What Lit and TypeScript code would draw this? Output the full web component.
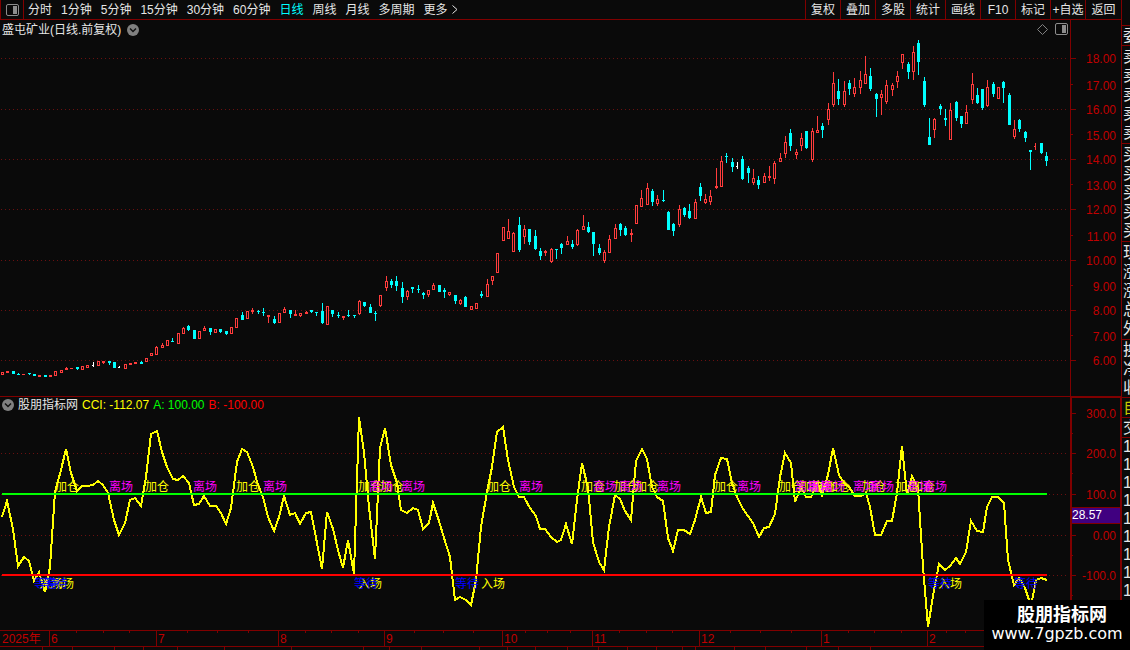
import { LitElement, html, svg, css } from "lit";
import { customElement, property } from "lit/decorators.js";
import { classMap } from "lit/directives/class-map.js";

const COLUMN_STEP = 5.327;
const columnX = (i: number) => Math.round(2 + i * COLUMN_STEP);

// Each candle: high, body top, body bottom, low, kind (r = up, c = down, w = flat).
const CANDLES = `
372 372 375 375 r;371 371 373 373 r;371 371 374 374 c;373 374 375 375 c;374 374 375 375 r;373 373 374 375 c;374 374 376 376 c;375 375 377 377 r;375 375 377 377 c;375 375 377 377 r;
371 371 376 376 r;370 370 373 373 r;367 368 370 370 r;368 368 369 369 r;367 367 369 370 c;366 366 370 370 r;365 365 368 368 r;362 365 366 367 w;361 361 366 366 r;361 361 363 364 r;
361 361 363 365 c;362 362 368 368 c;366 367 368 368 w;364 364 369 369 r;363 363 365 365 r;362 362 364 364 r;361 362 364 364 c;358 358 362 362 r;353 353 356 356 r;346 347 355 355 r;
343 345 348 348 r;340 340 346 346 r;338 341 342 342 c;333 333 344 344 r;327 328 334 334 r;325 326 330 331 c;330 330 339 339 c;331 331 339 339 r;326 328 331 331 r;328 328 332 335 c;
329 329 333 333 r;329 329 332 333 c;331 331 334 335 c;327 327 334 334 r;318 318 328 328 r;312 315 320 320 c;311 311 319 319 r;308 310 312 314 r;310 311 312 314 c;308 312 313 316 c;
315 315 317 323 r;316 319 323 324 c;313 313 323 323 r;307 309 313 313 r;310 310 314 318 c;310 314 316 316 r;313 313 316 317 r;311 312 314 314 r;310 310 312 313 c;312 312 313 316 c;
303 311 323 324 c;306 306 325 325 r;310 310 314 317 c;312 315 316 318 c;316 316 318 320 r;310 315 316 317 c;315 315 316 318 c;300 301 314 315 r;302 302 306 307 c;304 307 313 313 c;
311 313 314 321 c;295 295 306 307 r;276 281 288 291 r;279 281 285 288 c;276 281 286 291 c;282 288 297 303 c;290 291 297 300 r;287 287 289 293 c;285 289 290 293 c;292 293 295 299 c;
290 290 295 297 r;283 285 290 290 r;285 285 292 292 c;288 290 292 298 c;292 292 295 296 r;295 295 301 304 c;299 300 304 305 r;296 297 307 307 c;306 306 310 310 r;303 303 309 309 r;
291 294 296 298 c;279 284 297 297 r;276 276 281 285 r;253 253 273 273 r;227 227 241 241 r;219 231 239 239 r;232 233 252 252 r;217 225 250 252 c;225 229 237 244 r;229 229 242 245 c;
230 236 249 250 c;248 251 256 260 c;250 251 253 256 r;248 249 262 263 r;249 249 250 259 c;243 244 248 254 c;236 241 245 245 r;240 244 247 249 c;229 230 245 246 r;215 226 230 230 r;
222 227 232 233 c;232 232 244 256 c;244 248 253 255 c;250 252 261 263 r;235 239 253 253 r;224 228 239 239 r;223 224 230 236 c;226 228 235 236 c;229 233 235 242 r;205 205 224 224 r;
190 198 207 207 r;183 188 205 205 r;189 191 202 206 c;195 199 204 206 r;190 200 201 202 c;211 212 230 230 c;223 224 231 236 c;205 209 225 227 r;207 208 215 217 c;204 211 218 219 c;
199 202 219 219 r;183 187 196 201 c;194 199 203 204 r;190 196 202 205 r;168 186 188 189 r;156 161 187 187 r;153 156 157 163 c;158 162 167 172 c;162 166 167 169 w;156 159 179 180 c;
166 168 173 183 c;169 178 183 185 r;176 180 185 189 c;173 176 183 183 r;166 176 178 181 r;161 163 179 184 r;153 158 162 162 r;136 142 154 158 r;129 133 146 151 c;149 152 155 159 r;
133 138 146 151 r;131 131 148 149 c;128 131 160 162 r;116 130 133 133 r;123 126 130 138 c;103 109 120 125 r;72 83 105 107 r;79 91 99 105 c;81 91 105 107 r;80 83 89 95 c;
78 87 94 97 r;71 80 88 94 r;56 74 84 84 r;68 76 89 91 c;93 94 99 117 c;90 94 98 115 r;80 85 102 104 r;83 85 90 96 r;71 76 82 88 r;54 54 63 69 r;
62 64 72 79 c;46 52 72 80 r;40 43 62 75 c;77 81 105 107 c;118 137 145 145 c;118 119 130 138 r;104 106 109 115 c;109 118 120 126 c;103 110 140 140 r;101 102 118 121 c;
116 116 124 128 c;105 112 124 124 r;73 84 100 104 r;88 95 103 104 c;89 89 108 110 c;80 87 106 107 r;82 84 94 97 c;87 87 99 99 r;81 82 88 103 c;93 95 125 125 c;
120 129 137 139 r;119 120 129 132 c;131 132 138 142 c;150 150 152 170 c;143 146 147 150 r;143 143 153 154 c;152 156 161 166 c`
  .trim()
  .split(";")
  .map((row) => {
    const [high, top, bottom, low, kind] = row.trim().split(" ");
    return { high: +high, top: +top, bottom: +bottom, low: +low, kind };
  });

const CCI_POINTS =
  "2,517 7,501 13,529 18,566 24,557 29,561 34,581 39,572 45,592 50,567 55,492 61,470 66,449 71,473 77,491 82,486 87,486 93,485 98,481 103,485 108,493 114,520 119,535 125,523 130,500 135,498 141,506 146,477 151,434 157,431 162,452 167,467 173,479 178,480 183,476 189,483 194,505 199,504 204,496 210,506 216,506 221,513 226,524 231,508 237,462 242,449 247,452 253,467 258,485 263,497 268,517 274,531 279,517 284,496 290,515 295,513 300,524 306,513 311,512 317,543 322,569 327,512 333,529 338,550 343,568 348,540 354,574 359,417 364,452 369,507 375,559 380,448 385,428 391,465 397,483 401,510 407,513 413,508 418,510 423,529 429,523 433,503 439,521 444,538 450,557 455,600 460,597 466,600 471,605 476,580 481,527 487,492 492,467 497,432 503,427 508,460 514,487 519,497 524,497 530,508 536,516 540,529 545,529 551,537 557,542 561,540 566,524 572,544 577,500 582,463 588,488 593,542 599,562 604,570 609,527 615,495 620,499 625,511 631,520 636,461 642,449 647,459 652,487 657,497 663,501 668,538 673,551 678,530 684,530 690,534 695,520 701,497 706,513 711,512 715,475 721,458 727,459 732,483 737,497 743,509 748,516 753,523 759,537 764,528 769,527 775,514 780,477 785,453 791,463 795,502 801,487 806,497 811,497 817,482 822,495 828,475 833,448 839,475 844,483 849,487 855,496 861,496 866,493 870,507 875,535 881,535 887,521 892,521 897,493 902,446 907,495 912,476 918,488 923,567 928,627 934,590 939,564 945,570 950,566 956,558 960,564 966,552 971,521 977,531 983,532 987,507 992,497 998,497 1004,503 1008,560 1014,585 1019,578 1025,588 1031,606 1036,580 1041,578 1047,580";

const SIGNALS: { text: string; tone: string; y: number; xs: number[] }[] = [
  { text: "加仓", tone: "yellow", y: 491, xs: [55, 145, 236, 358, 380, 487, 581, 614, 635, 714, 779, 800, 811, 826, 862, 895, 911] },
  { text: "离场", tone: "magenta", y: 491, xs: [109, 193, 263, 369, 401, 519, 593, 619, 657, 737, 795, 808, 821, 853, 870, 907, 923] },
  { text: "入场", tone: "yellow", y: 588, xs: [39, 50, 358, 481, 938] },
  { text: "等待", tone: "blue", y: 588, xs: [34, 44, 354, 455, 928, 1014] },
];

const PRICE_TICKS: [string, number, number][] = [
  ["18.00", 58, 58], ["17.00", 84, 85], ["16.00", 109, 109], ["15.00", 134, 135],
  ["14.00", 159, 159], ["13.00", 184, 185], ["12.00", 209, 209], ["11.00", 235, 236],
  ["10.00", 260, 260], ["9.00", 285, 286], ["8.00", 310, 310], ["7.00", 335, 336], ["6.00", 360, 360],
];

const CCI_TICKS: [string, number][] = [
  ["300.0", 413], ["200.0", 453], ["100.0", 494], ["0.00", 535], ["-100.0", 575],
];

const MONTHS: [string, number][] = [
  ["6", 49], ["7", 156], ["8", 278], ["9", 384], ["10", 502], ["11", 592], ["12", 699], ["1", 821], ["2", 927],
];
const WEEKS = [76, 103, 129, 187, 217, 248, 305, 331, 358, 414, 443, 473, 525, 547, 570, 619, 646, 672, 730, 760, 791, 848, 874, 901, 946, 965];

const TABS: [number, string, boolean][] = [
  [43, "指标", false], [30, "", false], [42, "", false], [29, "", false], [34, "", false],
  [47, "", false], [67, "", false], [72, "", false], [26, "", false], [32, "", false], [58, "", false],
  [28, "", false], [28, "", false], [32, "", false], [31, "", false], [29, "", false], [29, "", false],
  [26, "", false], [13, "", false], [39, "", false], [31, "", false], [41, "", false], [32, "", false],
  [32, "设置", true],
];

const shared = css`
  * { box-sizing: border-box; }
  button {
    margin: 0;
    padding: 0;
    border: 0;
    background: none;
    color: inherit;
    font: inherit;
    white-space: nowrap;
    cursor: pointer;
  }
  svg { display: block; }
`;

const chartStyles = css`
  :host { display: block; position: relative; }
  .plot { width: 100%; height: auto; }
  .crisp { shape-rendering: crispEdges; }
  .frame { fill: #800000; }
  .grid { stroke: #6a1010; stroke-dasharray: 1 3; }
  .scale { fill: #c00000; font-size: 12px; }
  .end { text-anchor: end; }
  .head {
    position: absolute;
    top: 0;
    left: 2px;
    display: flex;
    align-items: center;
    gap: 4px;
    height: 18px;
    line-height: 18px;
    color: #e6e6e6;
    white-space: nowrap;
  }
`;

const chevron = html`<svg width="12" height="12" viewBox="0 0 12 12" aria-hidden="true">
  <circle cx="6" cy="6" r="6" fill="#808080"></circle>
  <path d="M3 4.5 6 7.5 9 4.5" fill="none" stroke="#111" stroke-width="1.5"></path>
</svg>`;

const panelIcon = html`<svg width="13" height="12" viewBox="0 0 13 12" aria-hidden="true">
  <rect x="0.5" y="0.5" width="12" height="11" rx="1.5" fill="none" stroke="#8c8c8c"></rect>
  <rect x="7" y="2" width="4" height="8" fill="#8c8c8c"></rect>
</svg>`;

@customElement("top-toolbar")
export class TopToolbar extends LitElement {
  static styles = [shared, css`
    :host {
      display: flex;
      align-items: stretch;
      justify-content: space-between;
      height: 20px;
      border-bottom: 1px solid #800000;
      color: #e6e6e6;
    }
    .side { display: flex; }
    .toggle {
      display: grid;
      place-items: center;
      width: 24px;
      border: solid #800000;
      border-width: 0 1px;
    }
    .periods { display: flex; align-items: center; gap: 9px; padding-left: 4px; }
    .active { color: #00ffff; }
    .more { display: flex; align-items: center; gap: 4px; }
    .tool { width: 35px; border-left: 1px solid #800000; }
    .tool:last-child { width: 36px; }
  `];

  @property() period = "日线";

  render() {
    const periods = ["分时", "1分钟", "5分钟", "15分钟", "30分钟", "60分钟", "日线", "周线", "月线", "多周期"];
    const tools = ["复权", "叠加", "多股", "统计", "画线", "F10", "标记", "+自选", "返回"];
    return html`
      <div class="side">
        <button class="toggle" aria-label="侧栏">${panelIcon}</button>
        <nav class="periods">
          ${periods.map((p) => html`<button class=${classMap({ active: p === this.period })} @click=${() => (this.period = p)}>${p}</button>`)}
          <button class="more">更多<svg width="6" height="9" viewBox="0 0 6 9" aria-hidden="true">
            <path d="M0.5 0.5 5 4.5 0.5 8.5" fill="none" stroke="#e6e6e6"></path></svg></button>
        </nav>
      </div>
      <div class="side">${tools.map((t) => html`<button class="tool">${t}</button>`)}</div>`;
  }
}

@customElement("price-chart")
export class PriceChart extends LitElement {
  static styles = [shared, chartStyles, css`
    .head { height: 19px; line-height: 20px; gap: 6px; }
    .actions {
      position: absolute;
      top: 3px;
      right: 53px;
      display: flex;
      align-items: center;
      gap: 7px;
    }
    .r { fill: #ff3c3c; stroke: none; }
    .c { fill: #00ffff; }
    .w { fill: #ffffff; }
    .hollow { fill: #0a0a0a; }
  `];

  private candle(c: (typeof CANDLES)[number], i: number) {
    const x = columnX(i);
    const h = c.bottom - c.top;
    const flat = c.kind === "w" || (c.kind === "r" && h === 1 && c.high < c.top);
    return svg`<g class=${c.kind}>
      <rect x=${x} y=${c.high} width="1" height=${c.low - c.high}></rect>
      <rect x=${x - 1} y=${c.top} width=${flat ? 2 : 3} height=${h}></rect>
      ${c.kind === "r" && h > 2 ? svg`<rect class="hollow" x=${x} y=${c.top + 1} width="1" height=${h - 2}></rect>` : null}
    </g>`;
  }

  render() {
    return html`
      <svg class="plot" viewBox="0 20 1121 376" role="img" aria-label="盛屯矿业 日线">
        <g class="crisp">
          ${PRICE_TICKS.map(([, y], i) => i % 2 ? svg`<rect class="frame" x="1071" y=${y} width="2" height="1"></rect>`
            : svg`<path class="grid" d=${`M1 ${y + 0.5}H1067`}></path><rect class="frame" x="1071" y=${y} width="5" height="1"></rect>`)}
          ${CANDLES.map((c, i) => this.candle(c, i))}
          <rect class="frame" x="1070" y="20" width="1" height="376"></rect>
        </g>
        ${PRICE_TICKS.map(([label, , y]) => svg`<text class="scale end" x="1116" y=${y + 5}>${label}</text>`)}
      </svg>
      <div class="head"><span>盛屯矿业(日线.前复权)</span><button aria-label="展开">${chevron}</button></div>
      <div class="actions">
        <button aria-label="标注"><svg width="11" height="11" viewBox="0 0 11 11"><path d="M5.5 0.5 10.5 5.5 5.5 10.5 0.5 5.5Z" fill="none" stroke="#808080"></path></svg></button>
        <button aria-label="面板">${panelIcon}</button>
      </div>`;
  }
}

@customElement("cci-chart")
export class CciChart extends LitElement {
  static styles = [shared, chartStyles, css`
    .line { fill: none; stroke: #ffff00; stroke-width: 2; }
    .upper { fill: #00ff00; }
    .lower { fill: #ff0000; }
    .signal { font-size: 12px; }
    .yellow { fill: #ffff00; color: #ffff00; }
    .magenta { fill: #ff00ff; }
    .blue { fill: #0000ff; }
    .green { color: #00ff00; }
    .red { color: #ff0000; }
    .current { fill: #400080; }
    .currentText { fill: #ffffff; font-size: 12px; }
  `];

  render() {
    return html`
      <svg class="plot" viewBox="0 396 1121 234" role="img" aria-label="CCI 指标">
        <g class="crisp">
          ${[453, 494, 535, 575].map((y) => svg`<path class="grid" d=${`M1 ${y + 0.5}H1067`}></path>`)}
          <polyline class="line" points=${CCI_POINTS}></polyline>
          <rect class="upper" x="2" y="493" width="1045" height="2"></rect>
          <rect class="lower" x="2" y="574" width="1045" height="2"></rect>
          <rect class="frame" x="0" y="396" width="1121" height="1"></rect>
          <rect class="frame" x="1070" y="396" width="51" height="2"></rect>
          <rect class="frame" x="1070" y="396" width="2" height="234"></rect>
          <rect class="frame" x="1120" y="396" width="1" height="234"></rect>
          ${CCI_TICKS.map(([, y]) => svg`<rect class="frame" x="1072" y=${y} width="4" height="1"></rect>
            <rect class="frame" x="1072" y=${y + 20} width="1" height="1"></rect>`)}
          <rect class="frame" x="1072" y="507" width="48" height="17"></rect>
          <rect class="current" x="1072" y="508" width="48" height="15"></rect>
        </g>
        ${SIGNALS.map((s) => s.xs.map((x) => svg`<text class=${`signal ${s.tone}`} x=${x} y=${s.y}>${s.text}</text>`))}
        ${CCI_TICKS.map(([label, y]) => svg`<text class="scale end" x="1116" y=${y + 5}>${label}</text>`)}
        <text class="currentText" x="1072" y="519">28.57</text>
      </svg>
      <div class="head">
        <button aria-label="展开">${chevron}</button>
        <span>股朋指标网</span>
        <span class="yellow">CCI: -112.07</span>
        <span class="green">A: 100.00</span>
        <span class="red">B: -100.00</span>
      </div>`;
  }
}

@customElement("date-axis")
export class DateAxis extends LitElement {
  static styles = [shared, chartStyles];

  render() {
    return html`<svg class="plot" viewBox="0 630 1121 17" role="img" aria-label="日期">
      <g class="crisp frame">
        <rect x="0" y="630" width="1121" height="1"></rect>
        <rect x="0" y="646" width="1121" height="1"></rect>
        ${MONTHS.map(([, x]) => svg`<rect x=${x} y="630" width="1" height="16"></rect>`)}
        ${WEEKS.map((x) => svg`<rect x=${x} y="630" width="1" height="3"></rect>`)}
      </g>
      <text class="scale" x="2" y="643">2025年</text>
      ${MONTHS.map(([label, x]) => svg`<text class="scale" x=${x + 2} y="643">${label}</text>`)}
    </svg>`;
  }
}

@customElement("quote-strip")
export class QuoteStrip extends LitElement {
  static styles = [shared, css`
    :host {
      display: block;
      overflow: hidden;
      padding-top: 25px;
      border-left: 1px solid #800000;
      color: #e6e6e6;
      font-size: 16px;
    }
    .group { border-top: 1px solid #800000; }
    .row { height: 19px; line-height: 19px; padding-left: 1px; white-space: nowrap; }
    .five { padding: 1px 0; }
    .trades .row { height: 18px; line-height: 18px; }
    .own { color: #c8c800; }
  `];

  render() {
    const groups = [["委比"], Array(5).fill("卖盘"), Array(5).fill("买盘"), ["现价", "涨跌", "涨幅", "总量", "外盘"], ["换手", "净资", "收益"]];
    return html`
      ${groups.map((g) => html`<div class=${classMap({ group: true, five: g.length > 3 })}>${g.map((t) => html`<div class="row">${t}</div>`)}</div>`)}
      <div class="group own"><div class="row">自选</div></div>
      <div class="group"><div class="row">交易</div></div>
      <div class="group trades">${Array(11).fill("14:5").map((t) => html`<div class="row">${t}</div>`)}</div>`;
  }
}

@customElement("app-root")
export class AppRoot extends LitElement {
  static styles = [shared, css`
    :host {
      position: relative;
      display: flex;
      min-height: 100vh;
      max-height: 100vh;
      overflow: hidden;
      background: #0a0a0a;
      font: 12px/16px "Liberation Sans", "Noto Sans CJK SC", sans-serif;
    }
    .main { flex: 1; min-width: 0; }
    .side { flex: 0 0 9px; }
    .tabs { display: flex; color: #e6e6e6; overflow: hidden; }
    .tab { flex: none; height: 20px; border-right: 1px solid #800000; }
    .tab.hot { color: #00ffff; }
    .brand {
      position: absolute;
      right: 0;
      bottom: 0;
      display: flex;
      flex-direction: column;
      align-items: center;
      width: 146px;
      height: 50px;
      padding-top: 6px;
      background: #000;
      color: #fff;
    }
    .name { padding-left: 10px; font-size: 18px; line-height: 18px; font-weight: 700; }
    .site { font: 16px/20px "DejaVu Sans", sans-serif; color: #fff; text-decoration: none; }
  `];

  render() {
    return html`
      <main class="main">
        <top-toolbar></top-toolbar>
        <price-chart></price-chart>
        <cci-chart></cci-chart>
        <date-axis></date-axis>
        <div class="tabs">
          ${TABS.map(([w, t, hot]) => html`<button class=${classMap({ tab: true, hot })} style=${`width:${w}px`}>${t}</button>`)}
        </div>
      </main>
      <quote-strip class="side"></quote-strip>
      <div class="brand">
        <span class="name">股朋指标网</span>
        <a class="site" href="#">www.7gpzb.com</a>
      </div>`;
  }
}
